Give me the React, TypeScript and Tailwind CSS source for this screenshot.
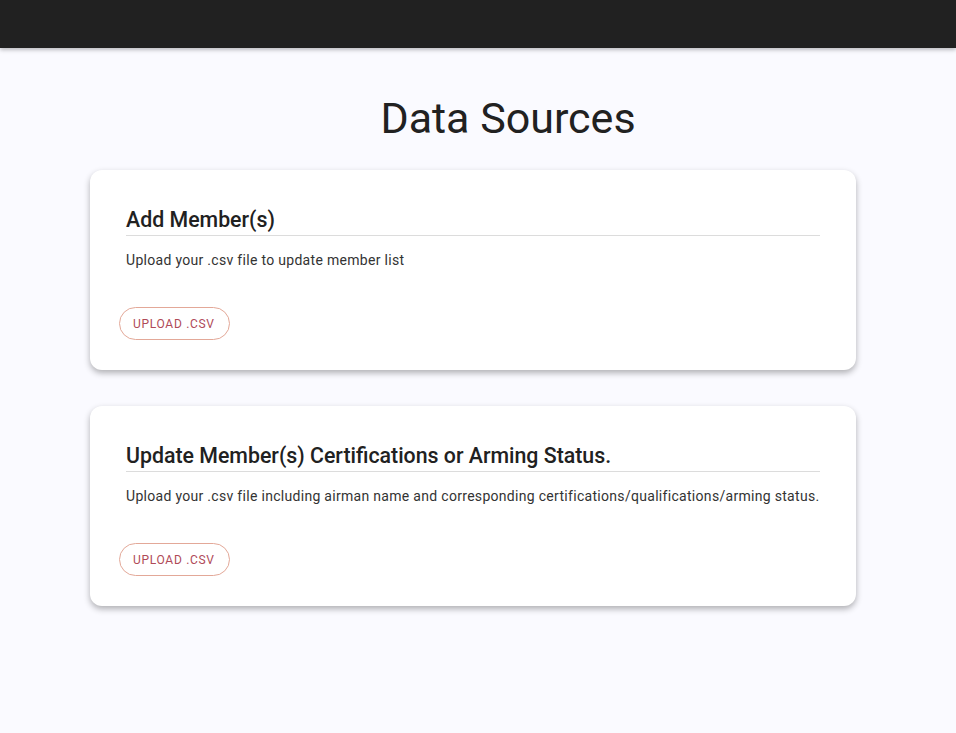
export default function App() {
  const cards = [
    {
      title: "Add Member(s)",
      text: "Upload your .csv file to update member list",
    },
    {
      title: "Update Member(s) Certifications or Arming Status.",
      text: "Upload your .csv file including airman name and corresponding certifications/qualifications/arming status.",
    },
  ];

  return (
    <div
      className="min-h-[733px] bg-[#fafaff] text-[#212121]"
      style={{ fontFamily: "Roboto, 'Liberation Sans', sans-serif" }}
    >
      {/* Top bar */}
      <header className="h-[48px] bg-[#212121] shadow-[0_2px_4px_rgba(0,0,0,0.25)]" />

      <main className="flex flex-col items-center">
        <h1 className="mt-[42px] pl-[60px] text-[43px] font-normal leading-[56px] text-[#212121]">
          Data Sources
        </h1>

        <div className="mt-[24px] flex w-[766px] flex-col gap-[36px] pr-[10px] box-content">
          {cards.map((c) => (
            <section
              key={c.title}
              className="flex h-[200px] flex-col rounded-[12px] bg-white px-[36px] pt-[36px] shadow-[0_3px_6px_rgba(0,0,0,0.3)]"
            >
              <h2 className="border-b border-[#dcdcdc] pb-[1px] text-[21.33px] font-medium leading-[28px] text-[#212121]">
                {c.title}
              </h2>
              <p className="mt-[14px] text-[14px] leading-[20px] tracking-[0.3px] text-[#333]">
                {c.text}
              </p>
              <div className="mt-[37px]">
                <button className="-ml-[7px] h-[33px] rounded-full border border-[#e3a898] pl-[13px] pr-[14px] text-[12px] font-normal tracking-[0.7px] text-[#b04a58] uppercase">
                  Upload .csv
                </button>
              </div>
            </section>
          ))}
        </div>
      </main>
    </div>
  );
}
